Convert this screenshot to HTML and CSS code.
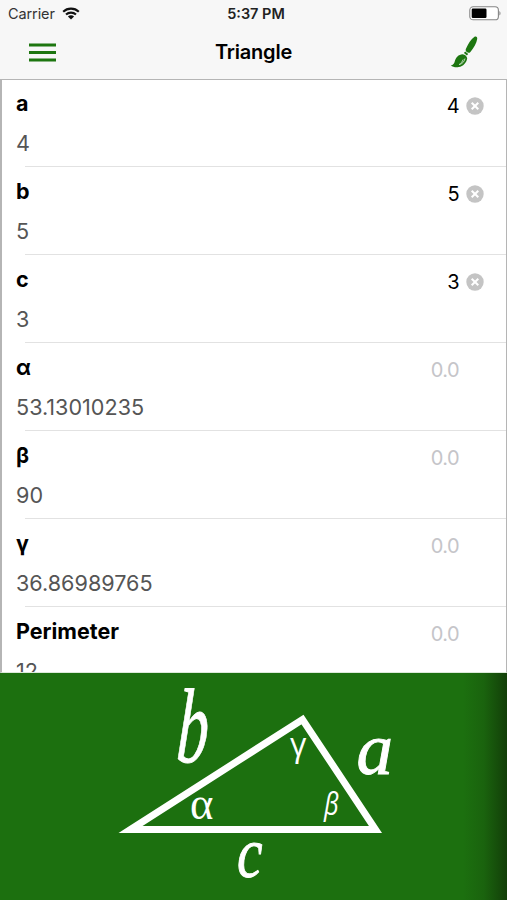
FILE: index.html
```html
<!DOCTYPE html>
<html lang="en">
<head>
    <meta charset="UTF-8">
    <meta name="viewport" content="width=device-width, initial-scale=1.0">
    <title>Triangle</title>
    <link rel="stylesheet" href="styles.css">
</head>
<body>
    <div class="app">
        <div class="status-bar">
            <div class="carrier">
                <span>Carrier</span>
                <svg class="wifi" width="18" height="13" viewBox="0 0 18 13">
                    <path d="M1.2 4.7C5.5.6 12.5.6 16.8 4.7M4 7.6c2.8-2.6 7.2-2.6 10 0" fill="none" stroke="#111" stroke-width="2.1"/>
                    <path d="M9 12.6 5.9 9.5c1.7-1.6 4.5-1.6 6.2 0z" fill="#111"/>
                </svg>
            </div>
            <span class="time">5:37 PM</span>
            <svg class="battery" width="33" height="15" viewBox="0 0 33 15">
                <rect x="1.8" y=".8" width="28.6" height="13" rx="3.4" fill="#fff" stroke="#858585" stroke-width="1.1"/>
                <rect x="3.7" y="2.6" width="14.8" height="9.4" rx="1.2" fill="#000"/>
                <path d="M31.4 5v4.6c1.500-.9 1.500-3.700 0-4.600z" fill="#858585"/>
            </svg>
        </div>

        <div class="nav-bar">
            <svg class="menu" width="27" height="19" viewBox="0 0 27 19">
                <path d="M0 1.9h27M0 9.4h27M0 16.9h27" stroke="#1d7610" stroke-width="3"/>
            </svg>
            <h1>Triangle</h1>
            <svg class="brush" width="28" height="32" viewBox="0 0 28 32">
                <path d="M24.500.8c1.900-.7 3 .2 2.700 2.200-.7 4.500-3.300 8.800-6.800 12.900-1 1.200-2.500 1-3.600.1-1.200-1-1.500-2.300-.6-3.700C18.200 7.900 20.800 3.500 24.500.8z" fill="#1d7610"/>
                <path d="m15.200 15.600 3 2.500-1.300 1.500-3-2.500z" fill="#1d7610"/>
                <path d="M12.700 18.300c2.300.2 4 1.700 4.500 3.900-.7 4.600-4 8-8.500 8.800-3 .5-6-.1-7.900-1.600 2.500-.4 3.300-1.600 4-4.100.9-3.600 3.600-6.900 7.900-7z" fill="#1d7610"/>
                <path d="M15 22.500c-.6 3.300-2.900 5.500-6 6.200 2.200-1.600 3.300-3 4.200-5.200" fill="none" stroke="#b9d8b5" stroke-width="1"/>
            </svg>
        </div>

        <div class="list">
            <div class="row">
                <div class="line"><h2>a</h2><span class="value">4</span><svg class="clear" width="18" height="18" viewBox="0 0 18 18"><circle cx="9" cy="9" r="8.7"/><path d="m5.700 5.700 6.600 6.600m0-6.600-6.600 6.600"/></svg></div>
                <p>4</p>
            </div>
            <div class="row">
                <div class="line"><h2>b</h2><span class="value">5</span><svg class="clear" width="18" height="18" viewBox="0 0 18 18"><circle cx="9" cy="9" r="8.7"/><path d="m5.700 5.700 6.600 6.600m0-6.600-6.600 6.600"/></svg></div>
                <p>5</p>
            </div>
            <div class="row">
                <div class="line"><h2>c</h2><span class="value">3</span><svg class="clear" width="18" height="18" viewBox="0 0 18 18"><circle cx="9" cy="9" r="8.7"/><path d="m5.700 5.700 6.600 6.600m0-6.600-6.600 6.600"/></svg></div>
                <p>3</p>
            </div>
            <div class="row">
                <div class="line"><h2>α</h2><span class="value empty">0.0</span></div>
                <p>53.13010235</p>
            </div>
            <div class="row">
                <div class="line"><h2>β</h2><span class="value empty">0.0</span></div>
                <p>90</p>
            </div>
            <div class="row">
                <div class="line"><h2>γ</h2><span class="value empty">0.0</span></div>
                <p>36.86989765</p>
            </div>
            <div class="row">
                <div class="line"><h2>Perimeter</h2><span class="value empty">0.0</span></div>
                <p>12</p>
            </div>
        </div>

        <div class="figure">
            <svg width="507" height="227" viewBox="0 0 507 227">
                <path class="triangle" d="M130.500 156.500 302.500 46.500 375.500 156.500z"/>
                <text class="side" transform="translate(175.500 88.500) skewX(-3) scale(.6 1)" font-size="106">b</text>
                <text class="side" transform="translate(356.500 101)" font-size="73">a</text>
                <text class="side" transform="translate(237 203.500) scale(.81 1)" font-size="71">c</text>
                <text class="angle-serif" transform="translate(190 145.500) scale(.95 1)" font-size="47">α</text>
                <text class="angle" transform="translate(290 83) scale(1 1)" font-size="32">γ</text>
                <text class="angle slant" transform="translate(324 142) scale(.82 1)" font-size="31">β</text>
            </svg>
        </div>
    </div>
</body>
</html>
```
FILE: styles.css
```css
* {
    box-sizing: border-box;
}

body {
    margin: 0;
    font-family: Inter, "Liberation Sans", sans-serif;
    color: #000;
    background-color: #f7f7f7;
}

h1, h2, p {
    margin: 0;
}

.app {
    height: 900px;
    display: flex;
    flex-direction: column;
    overflow: hidden;
}

.status-bar {
    height: 27px;
    padding: 0 6px 0 8px;
    display: grid;
    grid-template-columns: 1fr auto 1fr;
    align-items: center;
    font-size: 14.5px;
}

.carrier {
    display: flex;
    align-items: center;
    gap: 7px;
    color: #333;
    letter-spacing: -0.1px;
}

.time {
    font-weight: 600;
    color: #222;
    padding-left: 3px;
}

.battery {
    justify-self: end;
}

.nav-bar {
    height: 52px;
    padding: 0 29px 2px;
    display: grid;
    grid-template-columns: 1fr auto 1fr;
    align-items: center;
}

.nav-bar h1 {
    font-size: 20px;
    font-weight: 600;
    letter-spacing: -0.2px;
}

.brush {
    justify-self: end;
}

.list {
    height: 594px;
    border: 1px solid #b5b5b5;
    border-left-width: 2px;
    border-bottom-color: #dce9da;
    background-color: #fff;
    overflow: hidden;
}

.row {
    height: 88px;
    padding: 8px 22px 0 14px;
    background: linear-gradient(#e2e2e2, #e2e2e2) 23px 86px / 100% 1px no-repeat;
}

.line {
    height: 36px;
    display: flex;
    align-items: center;
}

.line h2 {
    flex: 1;
    font-size: 21.5px;
    font-weight: 700;
    line-height: 30px;
    margin-bottom: 6px;
}

.value {
    font-size: 20px;
    letter-spacing: -0.6px;
}

.empty {
    margin-right: 25px;
    color: #c5c5c9;
}

.clear {
    margin-left: 7px;
}

.clear circle {
    fill: #c4c4c4;
}

.clear path {
    stroke: #fff;
    stroke-width: 2;
}

.row p {
    font-size: 21.6px;
    line-height: 38px;
    color: #555;
}

.figure {
    height: 227px;
    background: linear-gradient(to right, transparent 463px, rgba(20, 60, 10, 0.25) 484px, rgba(18, 60, 8, 0.95) 507px), #1c700f;
}

.figure svg {
    display: block;
}

.triangle {
    fill: none;
    stroke: #fff;
    stroke-width: 7;
    stroke-miterlimit: 10;
}

.side, .angle, .angle-serif {
    fill: #fff;
}

.side {
    font-family: "Liberation Serif", serif;
    font-style: italic;
    stroke: #fff;
    stroke-width: 0.9;
}

.angle-serif {
    font-family: "Liberation Serif", serif;
}

.angle {
    font-family: "Open Sans", sans-serif;
}

.slant {
    font-style: italic;
}
```
